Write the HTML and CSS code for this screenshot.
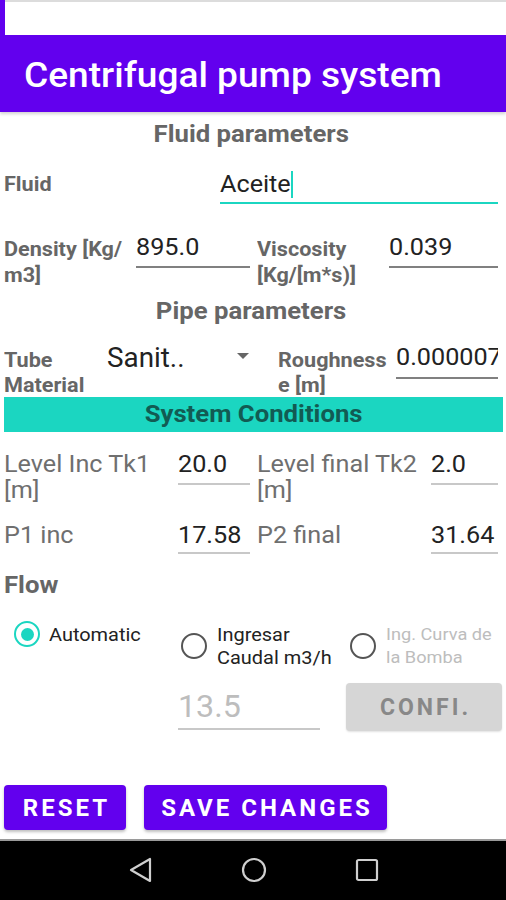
FILE: index.html
```html
<!DOCTYPE html>
<html>
<head>
<meta charset="utf-8">
<link rel="stylesheet" href="styles.css">
</head>
<body>
<div class="status"><div class="status-inner"></div></div>
<header class="appbar"><h1 class="title">Centrifugal pump system</h1></header>
<main class="content">
  <div class="section-title"><span class="st">Fluid parameters</span></div>

  <div class="row row-fluid">
    <div class="label label-bold fluid-label">Fluid</div>
    <div class="input input-fluid"><span class="val">Aceite</span><span class="caret"></span></div>
  </div>

  <div class="row row-density">
    <div class="label-box lbl-density"><div class="label label-bold">Density [Kg/<br>m3]</div></div>
    <div class="input input-density"><span class="val">895.0</span></div>
    <div class="label-box lbl-visc"><div class="label label-bold">Viscosity<br>[Kg/[m*s)]</div></div>
    <div class="input input-visc"><span class="val">0.039</span></div>
  </div>

  <div class="section-title pipe-title"><span class="st">Pipe parameters</span></div>

  <div class="row row-tube">
    <div class="label-box lbl-tube"><div class="label label-bold">Tube<br>Material</div></div>
    <div class="spinner">
      <span class="spinner-text">Sanit..</span>
      <svg class="spinner-arrow" width="12" height="6" viewBox="0 0 12 6"><path d="M0 0 L12 0 L6 6 Z" fill="#666"/></svg>
    </div>
    <div class="label-box lbl-rough"><div class="label label-bold">Roughness<br>e [m]</div></div>
    <div class="input input-rough"><span class="val">0.000007</span></div>
  </div>

  <div class="bar"><span class="st">System Conditions</span></div>

  <div class="row row-level">
    <div class="label-box lbl-level"><div class="label label-reg">Level Inc Tk1<br>[m]</div></div>
    <div class="input input-sys input-level1"><span class="val">20.0</span></div>
    <div class="label-box lbl-level lbl-level2"><div class="label label-reg">Level final Tk2<br>[m]</div></div>
    <div class="input input-sys input-level2"><span class="val">2.0</span></div>
  </div>

  <div class="row row-p">
    <div class="label-box lbl-level"><div class="label label-reg">P1 inc</div></div>
    <div class="input input-sys input-level1"><span class="val">17.58</span></div>
    <div class="label-box lbl-level lbl-level2"><div class="label label-reg">P2 final</div></div>
    <div class="input input-sys input-level2"><span class="val">31.64</span></div>
  </div>

  <div class="flow-title"><span class="st">Flow</span></div>

  <div class="radios">
    <div class="radio radio-auto">
      <span class="circle checked"><span class="dot"></span></span>
      <span class="radio-text">Automatic</span>
    </div>
    <div class="radio radio-caudal">
      <span class="circle"></span>
      <span class="radio-text">Ingresar<br>Caudal m3/h</span>
    </div>
    <div class="radio radio-curva">
      <span class="circle"></span>
      <span class="radio-text disabled">Ing. Curva de<br>la Bomba</span>
    </div>
  </div>

  <div class="row row-caudal">
    <div class="input input-hint"><span class="val">13.5</span></div>
    <div class="btn-confi">CONFI.</div>
  </div>

  <div class="actions">
    <button class="btn btn-reset">RESET</button>
    <button class="btn btn-save">SAVE CHANGES</button>
  </div>
</main>
<nav class="navbar">
  <svg class="nav-icon nav-back" width="24" height="26" viewBox="0 0 24 26"><path d="M21 2 L21 24 L2 13 Z" fill="none" stroke="#cfcfcf" stroke-width="2.2" stroke-linejoin="round"/></svg>
  <svg class="nav-icon nav-home" width="26" height="26" viewBox="0 0 26 26"><circle cx="13" cy="13" r="11" fill="none" stroke="#cfcfcf" stroke-width="2.2"/></svg>
  <svg class="nav-icon nav-recent" width="24" height="24" viewBox="0 0 24 24"><rect x="2" y="2" width="20" height="20" rx="1.5" fill="none" stroke="#cfcfcf" stroke-width="2.2"/></svg>
</nav>
</body>
</html>
```

FILE: styles.css
```css
* { box-sizing: border-box; }
html, body { margin: 0; padding: 0; }
body {
  width: 506px;
  height: 900px;
  display: flex;
  flex-direction: column;
  font-family: Roboto, "Noto Sans", sans-serif;
  background: #fff;
  overflow: hidden;
}
.status {
  height: 37px;
  background: #6200ee;
  padding-left: 5px;
  flex: none;
}
.status-inner {
  height: 35px;
  background: #fff;
  border-top: 2px solid #dcdcdc;
}
.appbar {
  height: 75px;
  background: #6200ee;
  display: flex;
  align-items: center;
  padding-left: 24px;
  padding-top: 2px;
  flex: none;
  box-shadow: 0 2px 3px rgba(0,0,0,0.18);
  position: relative;
  z-index: 1;
}
.title {
  margin: 0;
  color: #fff;
  font-size: 35px;
  font-weight: 500;
  transform: scaleX(1.06);
  transform-origin: 0 50%;
  white-space: nowrap;
}
.content {
  flex: 1;
  padding: 0 8px 0 4px;
}
.st {
  display: inline-block;
  transform: scaleX(1.094);
  transform-origin: 50% 50%;
}
.section-title {
  text-align: center;
  font-size: 23.5px;
  font-weight: 700;
  color: #666;
  line-height: 30px;
  margin-top: 7px;
}
.pipe-title { margin-top: 8px; }
.row { display: flex; align-items: flex-start; }
.label { color: #666; white-space: nowrap; transform-origin: 0 0; }
.label-bold {
  font-size: 20px;
  font-weight: 700;
  line-height: 26px;
  transform: scaleX(1.08);
}
.label-reg {
  font-size: 24px;
  line-height: 26px;
  color: #6f6f6f;
  transform: scaleX(1.05);
}
.label-box { flex: none; }
.input {
  font-size: 24px;
  color: #222;
  line-height: 30px;
  border-bottom: 2px solid #808080;
  white-space: nowrap;
  overflow: hidden;
  flex: none;
}
.val {
  display: inline-block;
  transform: scaleX(1.05);
  transform-origin: 0 50%;
}
.row-fluid { margin-top: 11px; height: 48px; }
.fluid-label { width: 216px; line-height: 48px; flex: none; }
.input-fluid {
  width: 278px;
  margin-top: 9px;
  padding-bottom: 3px;
  border-bottom-color: #1bd6c1;
  display: flex;
  align-items: center;
  overflow: visible;
}
.caret {
  display: inline-block;
  width: 2px;
  height: 27px;
  background: #1bd6c1;
  margin-left: 4px;
}
.row-density { margin-top: 22px; height: 58px; }
.lbl-density { width: 132px; margin-top: 6px; }
.input-density { width: 114px; margin-top: 2px; padding-bottom: 4px; }
.lbl-visc { width: 132px; margin-left: 7px; margin-top: 6px; }
.input-visc { width: 109px; margin-top: 2px; padding-bottom: 4px; }
.row-tube { margin-top: 14px; height: 57px; }
.lbl-tube { width: 103px; margin-top: 8px; }
.lbl-tube .label, .lbl-rough .label { line-height: 25px; }
.spinner {
  width: 150px;
  margin-top: 3px;
  display: flex;
  align-items: center;
  justify-content: space-between;
  padding-right: 8px;
  height: 30px;
  flex: none;
}
.spinner-text {
  font-size: 27px;
  color: #222;
  line-height: 30px;
  display: inline-block;
  transform: scaleX(1.03);
  transform-origin: 0 50%;
}
.spinner-arrow { margin-top: -4px; }
.lbl-rough { width: 118px; margin-left: 21px; margin-top: 8px; }
.input-rough { width: 102px; margin-top: 2px; padding-bottom: 5px; }
.bar {
  height: 35px;
  line-height: 35px;
  background: #1bd6c1;
  color: #125b53;
  font-size: 23.5px;
  font-weight: 700;
  text-align: center;
  margin-right: -5px;
}
.row-level { margin-top: 12px; height: 56px; }
.lbl-level { width: 174px; margin-top: 7px; }
.lbl-level2 { margin-left: 7px; }
.input-sys { border-bottom-color: #c8c8c8; margin-top: 5px; padding-bottom: 4px; }
.input-level1 { width: 72px; }
.input-level2 { width: 67px; }
.row-p { margin-top: 15px; height: 41px; }
.row-p .input-sys { padding-bottom: 2px; }
.flow-title {
  font-size: 23.5px;
  font-weight: 700;
  color: #666;
  line-height: 30px;
  margin-top: 14px;
}
.flow-title .st { transform-origin: 0 50%; }
.radios {
  display: flex;
  align-items: flex-start;
  padding-top: 23px;
  height: 83px;
}
.radio { display: flex; align-items: center; flex: none; }
.radio-auto { margin-left: 10px; width: 167px; }
.radio-caudal { width: 169px; }
.circle {
  width: 26px;
  height: 26px;
  border-radius: 50%;
  border: 2.5px solid #555;
  flex: none;
  display: flex;
  align-items: center;
  justify-content: center;
}
.radio-auto .circle { margin-top: -2px; margin-bottom: -1px; }
.circle.checked { border-color: #1bd6c1; }
.dot { width: 13px; height: 13px; border-radius: 50%; background: #1bd6c1; }
.radio-text {
  font-size: 19px;
  line-height: 23px;
  color: #222;
  margin-left: 9px;
  white-space: nowrap;
  display: inline-block;
  transform: scaleX(1.05);
  transform-origin: 0 50%;
}
.radio-caudal .radio-text { margin-left: 10px; }
.radio-curva .radio-text { font-size: 17px; margin-left: 10px; transform: scaleX(1.07); }
.radio-text.disabled { color: #bdbdbd; }
.row-caudal { height: 48px; }
.input-hint {
  width: 142px;
  margin-left: 174px;
  margin-top: 6px;
  font-size: 31px;
  line-height: 36px;
  color: #bdbdbd;
  border-bottom-color: #c8c8c8;
  padding-bottom: 3px;
  overflow: visible;
}
.input-hint .val { transform: scaleX(1.04); }
.btn-confi {
  width: 156px;
  height: 48px;
  margin-left: 26px;
  background: #d6d6d6;
  border-radius: 4px;
  color: #888;
  font-size: 23px;
  font-weight: 700;
  letter-spacing: 3px;
  padding-left: 3px;
  display: flex;
  align-items: center;
  justify-content: center;
  box-shadow: 0 1px 2px rgba(0,0,0,0.12);
  flex: none;
}
.actions {
  display: flex;
  gap: 18px;
  margin-top: 54px;
}
.btn {
  height: 45px;
  border: none;
  border-radius: 4px;
  background: #6200ee;
  color: #fff;
  font-family: Roboto, "Noto Sans", sans-serif;
  font-size: 24px;
  font-weight: 700;
  letter-spacing: 3px;
  padding: 0 0 0 3px;
  box-shadow: 0 2px 3px rgba(0,0,0,0.25);
}
.btn-reset { width: 122px; }
.btn-save { width: 243px; }
.navbar {
  flex: none;
  height: 61px;
  background: #000;
  border-top: 2px solid #9a9a9a;
  display: flex;
  align-items: center;
  padding: 0 0 2px 129px;
}
.nav-home { margin-left: 88px; }
.nav-recent { margin-left: 88px; }
```
